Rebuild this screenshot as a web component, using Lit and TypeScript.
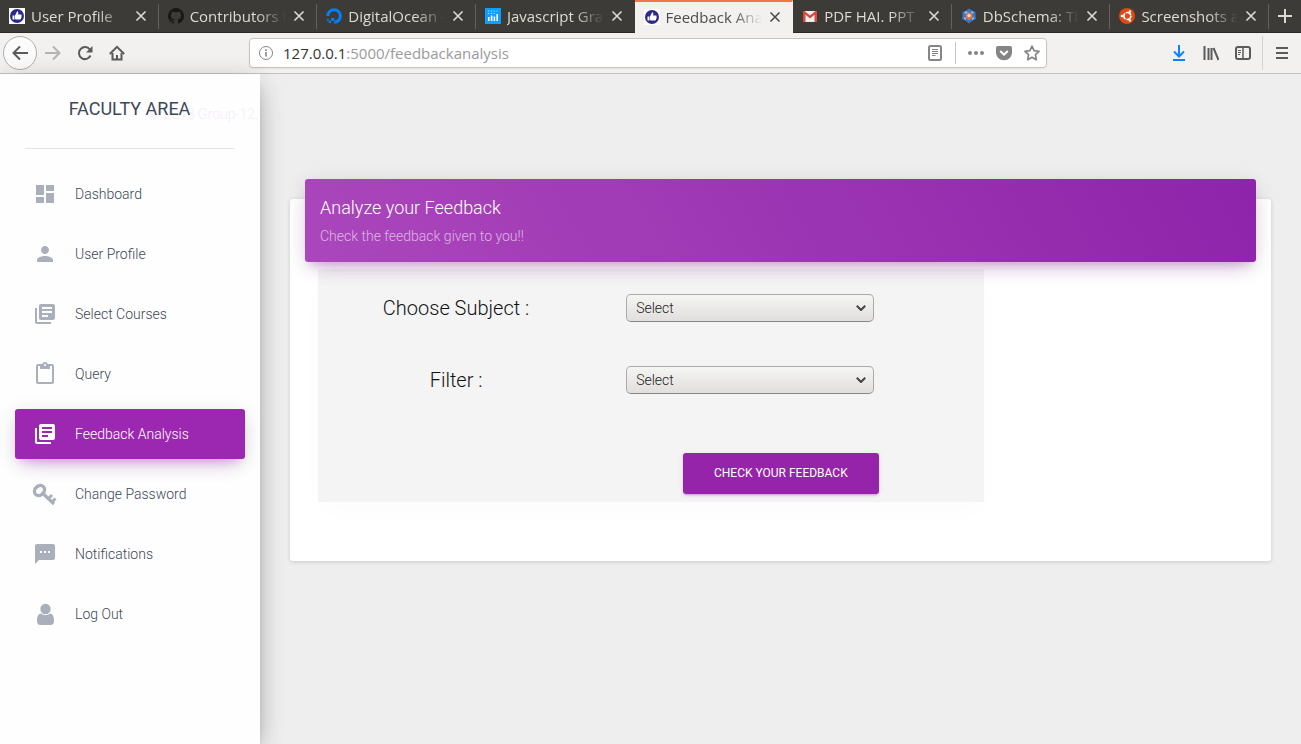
import { LitElement, html, css, svg, nothing } from "lit";
import { customElement } from "lit/decorators.js";
import { classMap } from "lit/directives/class-map.js";

const favThumb = svg`<rect width="16" height="16" fill="#fff"/><circle cx="8" cy="8" r="7" fill="#2b2a8c"/><path d="M3.5 7.5h2v4h-2zM6 7.5l2.2-4.2c1.2 0 1.3.9.9 3.2h2.9c.8 0 .8.9.4 1.2.5.4.3 1-.1 1.2.3.5.1 1-.3 1.2.2.7-.1 1.4-.9 1.4H7L6 11z" fill="#fff"/>`;

const favicons = {
  thumb: favThumb,
  github: svg`<path fill="#191717" d="M8 0a8 8 0 0 0-2.53 15.59c.4.07.55-.17.55-.38v-1.49c-2.23.48-2.7-.94-2.7-.94-.36-.93-.89-1.17-.89-1.17-.73-.5.05-.49.05-.49.81.06 1.23.83 1.23.83.72 1.23 1.88.87 2.34.67.07-.52.28-.87.5-1.07-1.78-.2-3.64-.89-3.64-3.95 0-.87.31-1.59.82-2.15-.08-.2-.36-1.01.08-2.12 0 0 .67-.21 2.2.82a7.6 7.6 0 0 1 4 0c1.53-1.03 2.2-.82 2.2-.82.44 1.11.16 1.92.08 2.12.51.56.82 1.28.82 2.15 0 3.07-1.87 3.75-3.65 3.95.29.25.54.73.54 1.48v2.2c0 .21.15.46.55.38A8 8 0 0 0 8 0z"/>`,
  ocean: svg`<path fill="none" stroke="#0080ff" stroke-width="3" d="M1.8 8a6.3 6.3 0 1 1 6.4 6.3"/><path fill="#0080ff" d="M5.2 10h3v3h-3zM2.8 12.8h2.3v2.3H2.8zM1 11h1.8v1.8H1z"/>`,
  chart: svg`<rect width="16" height="16" fill="#119dff"/><path stroke="#fff" stroke-width="1.6" d="M3.8 9v4M6.6 7.5V13M9.4 8.5V13M12.2 6v7"/><path stroke="#7ff" stroke-width="1.2" stroke-dasharray="1.2 1.6" d="M3 3h11M3 5.5h8"/>`,
  mail: svg`<path fill="#eee" d="M1 3h14v11H1z"/><path fill="#d54b3d" d="M1 3h1.5L8 7.5 13.500 3H15v11h-2.500V6.800L8 10.500 3.500 6.800V14H1z"/>`,
  db: svg`<path fill="#3a78c3" d="M8 .5l3 2 3.500 1.500v4L15 11l-4 2-3 2.500L5 13l-4-2 .5-3V4L5 2.500z"/><path fill="#8fbbe8" d="M5 3l2 1.500-2 1.500-2-1zM11 3l2 1.500-2 1.500-1-1.500zM3 9l2 1v2l-2-1zM13 9l-2 1v2l2-1z"/><path fill="#f0743a" d="M8 4l3.200 2.500v3.200L8 12 4.800 9.700V6.500z"/><circle cx="8" cy="7.500" r="1.600" fill="#fbe3d2"/>`,
  ubuntu: svg`<circle cx="8" cy="8" r="8" fill="#dd4814"/><circle cx="8.300" cy="8" r="3.500" fill="none" stroke="#fff" stroke-width="1.700" stroke-dasharray="6.300 1"/><circle cx="3" cy="8" r="1.300" fill="#fff"/><circle cx="10.900" cy="3.500" r="1.300" fill="#fff"/><circle cx="10.900" cy="12.500" r="1.300" fill="#fff"/>`,
};

const tabs: { title: string; icon: keyof typeof favicons; active?: boolean }[] = [
  { title: "User Profile", icon: "thumb" },
  { title: "Contributors to", icon: "github" },
  { title: "DigitalOcean - Cloud", icon: "ocean" },
  { title: "Javascript Graphing", icon: "chart" },
  { title: "Feedback Analysis", icon: "thumb", active: true },
  { title: "PDF HAI. PPT NAHI", icon: "mail" },
  { title: "DbSchema: The", icon: "db" },
  { title: "Screenshots and", icon: "ubuntu" },
];

const books = svg`<path d="M4 6H2v14c0 1.100.9 2 2 2h14v-2H4V6zm16-4H8c-1.100 0-2 .9-2 2v12c0 1.100.9 2 2 2h12c1.100 0 2-.9 2-2V4c0-1.100-.9-2-2-2zm-1 9H9V9h10v2zm-4 4H9v-2h6v2zm4-8H9V5h10v2z"/>`;

const links = [
  { label: "Dashboard", icon: svg`<path d="M3 13h8V3H3v10zm0 8h8v-6H3v6zm10 0h8V11h-8v10zm0-18v6h8V3h-8z"/>` },
  { label: "User Profile", icon: svg`<path d="M12 12c2.210 0 4-1.790 4-4s-1.790-4-4-4-4 1.790-4 4 1.790 4 4 4zm0 2c-2.670 0-8 1.340-8 4v2h16v-2c0-2.660-5.330-4-8-4z"/>` },
  { label: "Select Courses", icon: books },
  { label: "Query", icon: svg`<path d="M19 2h-4.180C14.400.84 13.300 0 12 0c-1.300 0-2.400.84-2.820 2H5c-1.100 0-2 .9-2 2v16c0 1.100.9 2 2 2h14c1.100 0 2-.9 2-2V4c0-1.100-.9-2-2-2zm-7 0c.55 0 1 .45 1 1s-.45 1-1 1-1-.45-1-1 .45-1 1-1zm7 18H5V4h2v3h10V4h2v16z"/>` },
  { label: "Feedback Analysis", icon: books, active: true },
  { label: "Change Password", icon: svg`<g fill="none" stroke="currentColor"><ellipse cx="6.500" cy="8.500" rx="5.500" ry="4.500" transform="rotate(-45 6.500 8.500)" stroke-width="3.400"/><path d="M10.500 12l10.500 10" stroke-width="3.200"/><path d="M15.500 16.500l3.500-3.500M19 20l3.500-3.500" stroke-width="3"/></g>` },
  { label: "Notifications", icon: svg`<path d="M20 2H4c-1.100 0-1.990.9-1.990 2L2 22l4-4h14c1.100 0 2-.9 2-2V4c0-1.100-.9-2-2-2zM9 11H7V9h2v2zm4 0h-2V9h2v2zm4 0h-2V9h2v2z"/>` },
  { label: "Log Out", icon: svg`<circle cx="12.500" cy="7" r="5.200"/><path d="M8 11.500c2.700 2.300 6.300 2.300 9 0 2.800.3 4 3 4 7.500 0 2.500-1.200 4-3.500 4h-10C5.200 23 4 21.500 4 19c0-4.500 1.200-7.200 4-7.500z"/>` },
];

@customElement("browser-tabs")
class BrowserTabs extends LitElement {
  static styles = css`
    :host { display: flex; height: 33px; background: #3c3b37; box-sizing: border-box; border-bottom: 1px solid #2a2926; }
    .tab { flex: 1 1 0; min-width: 0; display: flex; align-items: center; padding: 0 9px; box-sizing: border-box; color: #dfdbd2; border-right: 1px solid transparent; border-image: linear-gradient(transparent 5px, #62615d 5px, #62615d 28px, transparent 28px) 1; }
    .tab.active { background: #f2f1f0; color: #4c4c4c; border-image: none; border-top: 2px solid #f07746; margin-bottom: -1px; padding-bottom: 2px; }
    .tab.bare { border-image: none; }
    .fav { width: 16px; height: 16px; flex: none; margin-right: 6px; }
    .title { flex: 1; min-width: 0; overflow: hidden; white-space: nowrap; font: 15px/20px "Open Sans", "Noto Sans", sans-serif; mask-image: linear-gradient(to right, #000 calc(100% - 30px), transparent); }
    button { appearance: none; border: 0; padding: 0; margin: 0; background: none; color: inherit; display: grid; place-items: center; }
    .close { width: 16px; height: 16px; margin-left: 5px; flex: none; }
    .add { width: 32px; flex: none; color: #dfdbd2; }
  `;
  render() {
    return html`
      ${tabs.map(
        (t, i) => html`<div class=${classMap({ tab: true, active: !!t.active, bare: !!tabs[i + 1]?.active })}>
          <svg class="fav" viewBox="0 0 16 16">${favicons[t.icon]}</svg>
          <span class="title">${t.title}</span>
          <button class="close" aria-label="Close tab"><svg width="12" height="12" viewBox="0 0 12 12"><path d="M1.500 1.500l9 9m0-9l-9 9" stroke="currentColor" stroke-width="1.600"/></svg></button>
        </div>`
      )}
      <button class="add" aria-label="New tab"><svg width="14" height="14" viewBox="0 0 14 14"><path d="M7 0v14M0 7h14" stroke="currentColor" stroke-width="2"/></svg></button>
    `;
  }
}

@customElement("browser-toolbar")
class BrowserToolbar extends LitElement {
  static styles = css`
    :host { display: flex; align-items: center; height: 41px; box-sizing: border-box; background: #f2f1f0; border-bottom: 1px solid #c5c3c1; color: #5b5b5b; padding: 0 3px; }
    button { appearance: none; border: 0; padding: 0; margin: 0; background: none; color: inherit; display: grid; place-items: center; width: 32px; height: 32px; }
    svg { width: 16px; height: 16px; fill: none; stroke: currentColor; stroke-width: 2; }
    .back { width: 34px; height: 34px; border: 1px solid #b1b0ae; border-radius: 50%; background: #fbfbfb; box-sizing: border-box; }
    .forward { color: #b5b4b3; }
    .bar { flex: 1; margin: 0 116px; height: 30px; box-sizing: border-box; background: #fff; border: 1px solid #c6c4c2; border-radius: 4px; display: flex; align-items: center; padding: 0 0 0 8px; color: #858585; box-shadow: 0 1px 2px rgba(0, 0, 0, 0.06); }
    .address { flex: 1; min-width: 0; margin-left: 9px; font: 15px/20px "Open Sans", "Noto Sans", sans-serif; color: #9a9a9a; }
    .host { color: #333; }
    .bar button { width: 28px; height: 28px; }
    .bar .reader { width: 40px; }
    .rule { width: 1px; height: 22px; margin-right: 6px; background: #c8c8c8; }
    .end { display: flex; align-items: center; }
    .download { color: #0a84ff; }
    .split { width: 1px; height: 34px; background: #d5d3d1; margin: 0 3px; }
    .solid { fill: currentColor; stroke: none; }
    .thin { stroke-width: 1; }
  `;
  render() {
    return html`
      <button class="back" aria-label="Back"><svg viewBox="0 0 16 16"><path d="M16 8H2M8 1.500L1.500 8 8 14.500"/></svg></button>
      <button class="forward" aria-label="Forward"><svg viewBox="0 0 16 16"><path d="M0 8h14M8 1.500L14.500 8 8 14.500"/></svg></button>
      <button aria-label="Reload"><svg viewBox="0 0 16 16"><path d="M13.500 10.500A6 6 0 1 1 12.800 4.500"/><path class="solid" d="M15.500 1v6.500H9z"/></svg></button>
      <button aria-label="Home"><svg viewBox="0 0 16 16"><path d="M.8 9L8 1.800 15.200 9" /><path d="M3.500 8v6.500h9V8M8 14v-4" /></svg></button>
      <div class="bar">
        <svg class="thin" viewBox="0 0 16 16"><circle cx="8" cy="8" r="6.500"/><path d="M8 7v4.500M8 4.300v1.700" stroke-width="1.600"/></svg>
        <div class="address" role="textbox" aria-label="Address"><span class="host">127.0.0.1</span>:5000/feedbackanalysis</div>
        <button class="reader" aria-label="Reader view"><svg viewBox="0 0 16 16"><rect x="2" y="1" width="12" height="14" rx="1.500"/><path class="thin" d="M5 4.500h6M5 6.500h6M5 8.500h6M5 10.500h3.500"/></svg></button>
        <span class="rule"></span>
        <button aria-label="Page actions"><svg class="solid" viewBox="0 0 16 16"><circle cx="2" cy="8" r="2"/><circle cx="8" cy="8" r="2"/><circle cx="14" cy="8" r="2"/></svg></button>
        <button aria-label="Save to Pocket"><svg viewBox="0 0 16 16"><path class="solid" d="M2 1h12c1.200 0 2 .8 2 2v4.500c0 4.500-3.500 7.700-8 7.700S0 12 0 7.500V3c0-1.200.8-2 2-2z"/><path d="M4.200 6L8 9.600 11.800 6" stroke="#fff"/></svg></button>
        <button aria-label="Bookmark"><svg viewBox="0 0 16 16"><path stroke-width="1.700" stroke-linejoin="round" d="M8 1.200l2.100 4.500 4.900.6-3.600 3.400.9 5L8 12.300l-4.300 2.400.9-5L1 6.300l4.900-.6z"/></svg></button>
      </div>
      <div class="end">
        <button class="download" aria-label="Downloads"><svg viewBox="0 0 16 16"><path d="M8 0v11M3 6.500L8 11.500 13 6.500M2 15h12"/></svg></button>
        <button aria-label="Library"><svg viewBox="0 0 16 16"><path d="M1.500 1v14M5.500 3v12M8.500 3v12M10.500 3l5 12"/></svg></button>
        <button aria-label="Sidebars"><svg viewBox="0 0 16 16"><rect x="1" y="2" width="14" height="12" rx="2"/><path d="M8 2v12" stroke-width="1.500"/><path class="thin" d="M3 5.500h3M3 7.500h3M3 9.500h2"/></svg></button>
        <span class="split"></span>
        <button aria-label="Menu"><svg viewBox="0 0 16 16"><path d="M2 3h12M2 8h12M2 13h12"/></svg></button>
      </div>
    `;
  }
}

@customElement("side-nav")
class SideNav extends LitElement {
  static styles = css`
    :host { display: block; position: relative; z-index: 2; width: 260px; flex: none; box-sizing: border-box; background: #fefefe; box-shadow: 0 10px 30px -12px rgba(0, 0, 0, 0.42), 0 4px 25px 0 rgba(0, 0, 0, 0.12), 0 8px 10px -5px rgba(0, 0, 0, 0.2); font-family: Roboto, sans-serif; }
    .brand { position: relative; z-index: 1; margin: 0 26px 0 25px; height: 54px; padding-top: 20px; border-bottom: 1px solid #e2e4e5; color: #3c4858; font-size: 18px; line-height: 30px; font-weight: 400; text-align: center; }
    .ghost { position: absolute; top: 31px; left: 149px; right: 0; overflow: hidden; white-space: nowrap; font-size: 14px; line-height: 18px; font-weight: 300; color: #f3eef5; }
    ul { list-style: none; margin: 20px 15px 0; padding: 0; display: grid; gap: 10px; }
    a { display: flex; align-items: center; height: 50px; padding: 0 18px; border-radius: 3px; color: #3c4858; font-size: 14px; line-height: 30px; font-weight: 300; text-decoration: none; }
    svg { width: 24px; height: 24px; margin-right: 18px; color: #a9afbb; fill: currentColor; overflow: visible; flex: none; }
    a.active { background: #9c27b0; color: #fff; box-shadow: 0 12px 20px -10px rgba(156, 39, 176, 0.28), 0 4px 20px 0 rgba(0, 0, 0, 0.12), 0 7px 8px -5px rgba(156, 39, 176, 0.2); }
    .active svg { color: #fff; }
  `;
  render() {
    return html`
      <div class="ghost" aria-hidden="true">© 2018 Group-12,</div>
      <div class="brand">FACULTY AREA</div>
      <nav><ul>
        ${links.map(
          (l) => html`<li><a href="#" class=${classMap({ active: !!l.active })} aria-current=${l.active ? "page" : nothing}><svg viewBox="0 0 24 24">${l.icon}</svg>${l.label}</a></li>`
        )}
      </ul></nav>
    `;
  }
}

@customElement("app-root")
class AppRoot extends LitElement {
  static styles = css`
    :host { display: flex; flex-direction: column; min-height: 100vh; background: #eee; font-family: Roboto, sans-serif; font-weight: 300; }
    .page { flex: 1; display: flex; }
    main { flex: 1; min-width: 0; padding: 125px 30px 30px; }
    .card { background: #fff; border-radius: 3px; box-shadow: 0 1px 4px 0 rgba(0, 0, 0, 0.14); padding: 0 15px 59px; }
    .head { position: relative; top: -20px; margin-bottom: -13px; padding: 15px; border-radius: 3px; color: #fff; background: linear-gradient(60deg, #ab47bc, #8e24aa); box-shadow: 0 12px 20px -10px rgba(156, 39, 176, 0.28), 0 4px 20px 0 rgba(0, 0, 0, 0.12), 0 7px 8px -5px rgba(156, 39, 176, 0.2); }
    h4 { margin: 0; font-size: 18px; line-height: 28px; font-weight: 300; }
    .sub { margin: 4px 0 0; font-size: 14px; line-height: 21px; color: rgba(255, 255, 255, 0.62); }
    form { width: 70%; margin-left: 13px; box-sizing: border-box; background: #f4f4f4; padding: 17px 12px 8px 1px; display: grid; grid-template-columns: 42% 1fr; row-gap: 28px; align-items: center; box-shadow: 0 10px 30px -5px rgba(0, 0, 0, 0.02); }
    label { text-align: center; font-size: 20px; line-height: 44px; color: #111; }
    .field { padding-left: 33px; display: flex; }
    select { appearance: none; width: 248px; height: 28px; box-sizing: border-box; border: 1px solid #aaa; border-bottom-color: #888; border-radius: 5px; background: linear-gradient(#f5f5f4, #e1dfdd); font: 300 14px/20px Roboto, sans-serif; color: #222; padding: 0 30px 0 9px; margin: 0; }
    .caret { margin-left: -18px; align-self: center; width: 10px; height: 6px; fill: none; stroke: #444; stroke-width: 2; pointer-events: none; }
    .actions { grid-column: 1 / -1; margin-top: 23px; display: flex; justify-content: flex-end; padding-right: 93px; }
    .submit { appearance: none; border: 0; margin: 0; padding: 12px 31px; border-radius: 3px; background: #9624aa; color: #fff; font: 400 12px/17px Roboto, sans-serif; text-transform: uppercase; box-shadow: 0 2px 2px 0 rgba(156, 39, 176, 0.14), 0 3px 1px -2px rgba(156, 39, 176, 0.2), 0 1px 5px 0 rgba(156, 39, 176, 0.12); }
  `;
  render() {
    const field = (id: string, label: string) => html`
      <label for=${id}>${label}</label>
      <div class="field">
        <select id=${id}><option>Select</option></select>
        <svg class="caret" viewBox="0 0 10 6"><path d="M.8.8L5 5 9.200.8"/></svg>
      </div>`;
    return html`
      <browser-tabs></browser-tabs>
      <browser-toolbar></browser-toolbar>
      <div class="page">
        <side-nav></side-nav>
        <main>
          <section class="card">
            <header class="head">
              <h4>Analyze your Feedback</h4>
              <p class="sub">Check the feedback given to you!!</p>
            </header>
            <form @submit=${(e: Event) => e.preventDefault()}>
              ${field("subject", "Choose Subject :")} ${field("filter", "Filter :")}
              <div class="actions"><button class="submit">Check your feedback</button></div>
            </form>
          </section>
        </main>
      </div>
    `;
  }
}
